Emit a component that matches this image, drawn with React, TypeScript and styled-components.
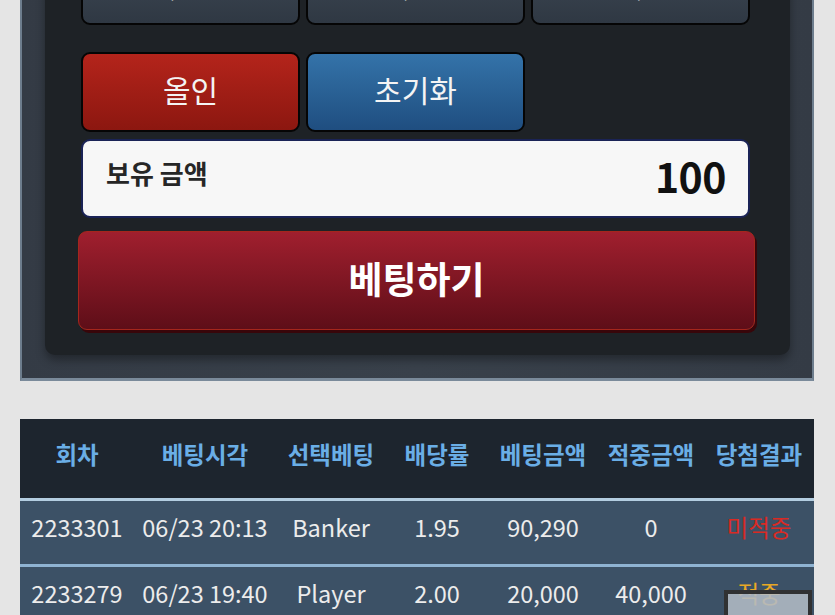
import React from "react"
import styled, { createGlobalStyle } from "styled-components"

const GlobalStyle = createGlobalStyle`
  html, body {
    margin: 0;
    padding: 0;
    background: #e5e5e5;
    overflow: hidden;
  }
  body {
    font-family: "Noto Sans CJK KR", "Noto Sans", sans-serif;
  }
`

interface Bet {
  readonly round: string
  readonly time: string
  readonly pick: string
  readonly odds: string
  readonly amount: string
  readonly won: string
  readonly result: "win" | "lose"
}

const bets: Bet[] = [
  {
    round: "2233301",
    time: "06/23 20:13",
    pick: "Banker",
    odds: "1.95",
    amount: "90,290",
    won: "0",
    result: "lose",
  },
  {
    round: "2233279",
    time: "06/23 19:40",
    pick: "Player",
    odds: "2.00",
    amount: "20,000",
    won: "40,000",
    result: "win",
  },
]

const columns = "114px 142px 110px 102px 110px 106px 110px"

const Page = styled.div`
  width: 835px;
  height: 615px;
  overflow: hidden;
  position: relative;
`

const OuterPanel = styled.section`
  margin: -79px 21px 0 20px;
  padding: 0 22px 23px 23px;
  background: linear-gradient(90deg, #343b45 0%, #39414b 50%, #343b45 100%);
  border-left: 2px solid #6d7d8d;
  border-right: 2px solid #6d7d8d;
  border-bottom: 3px solid #7a8a9a;
`

const InnerPanel = styled.div`
  background: #1e2226;
  border-radius: 0 0 10px 10px;
  padding: 24px 40px 25px 36px;
  box-shadow: 0 5px 10px rgba(0, 0, 0, 0.35);
`

const ButtonGrid = styled.div`
  display: grid;
  grid-template-columns: repeat(3, 219px);
  column-gap: 6px;
  row-gap: 27px;
`

type Tone = "gray" | "red" | "blue"

const toneBg: Record<Tone, string> = {
  gray: "linear-gradient(180deg, #414c58 0%, #2f3843 100%)",
  red: "linear-gradient(180deg, #b4241b 0%, #8c1710 100%)",
  blue: "linear-gradient(180deg, #3473a9 0%, #1f4e80 100%)",
}

const ChipButton = styled.button<{ $tone: Tone }>`
  height: 80px;
  border: 2px solid #050505;
  border-radius: 9px;
  background: ${(p) => toneBg[p.$tone]};
  color: #f4f4f4;
  font-family: "Noto Sans CJK KR", "Noto Sans", sans-serif;
  font-size: 30px;
  font-weight: 400;
  padding: 0 0 6px;
  display: flex;
  align-items: center;
  justify-content: center;
`

const BalanceBox = styled.div`
  margin-top: 7px;
  height: 79px;
  box-sizing: border-box;
  background: #f7f7f7;
  border: 2px solid #1a2356;
  border-radius: 9px;
  display: flex;
  align-items: center;
  justify-content: space-between;
  padding: 0 22px 0 23px;
`

const BalanceLabel = styled.span`
  font-size: 26px;
  font-weight: 700;
  color: #262626;
  margin-top: -12px;
`

const BalanceValue = styled.span`
  font-size: 41px;
  font-weight: 700;
  color: #111;
  letter-spacing: -0.5px;
  margin-top: -7px;
`

const BetButton = styled.button`
  margin: 13px 0 0 -3px;
  width: 677px;
  height: 99px;
  border: 1px solid #a5261c;
  border-radius: 9px;
  background: linear-gradient(180deg, #a01f2e 0%, #5e0e18 100%);
  box-shadow: 2px 3px 0 #38060a;
  color: #fff;
  font-family: "Noto Sans CJK KR", "Noto Sans", sans-serif;
  font-size: 37px;
  font-weight: 700;
  display: block;
  padding: 0 0 5px;
`

const Table = styled.div`
  margin: 38px 21px 0 20px;
`

const HeaderRow = styled.div`
  display: grid;
  grid-template-columns: ${columns};
  height: 79px;
  background: #1d252e;
  align-items: center;
  border-bottom: 3px solid #b3cde0;
`

const HeaderCell = styled.div`
  text-align: center;
  font-size: 23.5px;
  font-weight: 700;
  color: #6aaee6;
  white-space: nowrap;
  margin-top: -10px;
`

const BodyRow = styled.div`
  display: grid;
  grid-template-columns: ${columns};
  height: 63px;
  background: #3c5166;
  align-items: center;
  border-bottom: 3px solid #8fb3d2;
`

const Cell = styled.div<{ $tone?: "win" | "lose" }>`
  text-align: center;
  font-size: 23.5px;
  font-weight: 400;
  white-space: nowrap;
  margin-top: -12px;
  color: ${(p) =>
    p.$tone === "lose" ? "#d92a24" : p.$tone === "win" ? "#e9a825" : "#ececec"};
`

const TopButton = styled.div`
  position: absolute;
  left: 724px;
  top: 590px;
  width: 80px;
  height: 40px;
  border: 4px solid rgba(42, 42, 42, 0.95);
  background: rgba(178, 187, 197, 0.88);
`

const headers = ["회차", "베팅시각", "선택베팅", "배당률", "베팅금액", "적중금액", "당첨결과"]

export default function App() {
  return (
    <Page>
      <GlobalStyle />
      <OuterPanel>
        <InnerPanel>
          <ButtonGrid>
            <ChipButton $tone="gray">1,000</ChipButton>
            <ChipButton $tone="gray">10,000</ChipButton>
            <ChipButton $tone="gray">100,000</ChipButton>
            <ChipButton $tone="red">올인</ChipButton>
            <ChipButton $tone="blue">초기화</ChipButton>
          </ButtonGrid>
          <BalanceBox>
            <BalanceLabel>보유 금액</BalanceLabel>
            <BalanceValue>100</BalanceValue>
          </BalanceBox>
          <BetButton>베팅하기</BetButton>
        </InnerPanel>
      </OuterPanel>
      <Table>
        <HeaderRow>
          {headers.map((h) => (
            <HeaderCell key={h}>{h}</HeaderCell>
          ))}
        </HeaderRow>
        {bets.map((b) => (
          <BodyRow key={b.round}>
            <Cell>{b.round}</Cell>
            <Cell>{b.time}</Cell>
            <Cell>{b.pick}</Cell>
            <Cell>{b.odds}</Cell>
            <Cell>{b.amount}</Cell>
            <Cell>{b.won}</Cell>
            <Cell $tone={b.result}>{b.result === "win" ? "적중" : "미적중"}</Cell>
          </BodyRow>
        ))}
      </Table>
      <TopButton />
    </Page>
  )
}
